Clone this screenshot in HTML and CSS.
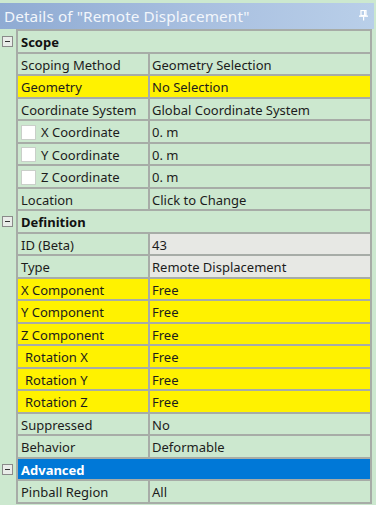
FILE: index.html
```html
<!DOCTYPE html>
<html>
<head>
<meta charset="utf-8">
<link rel="stylesheet" href="styles.css">
</head>
<body>
<div class="panel">
  <div class="strip"></div>
  <div class="title">
    <span class="title-text">Details of "Remote Displacement"</span>
    <svg class="pin" width="9" height="11" viewBox="0 0 9 11"><rect x="2" y="0.5" width="5" height="5" fill="none" stroke="#fff" stroke-width="1.2"/><rect x="5" y="1" width="1.5" height="4.5" fill="#fff"/><rect x="0" y="5.5" width="9" height="1.3" fill="#fff"/><rect x="4" y="6.5" width="1.2" height="4" fill="#fff"/></svg>
  </div>
  <div class="grid">
    <div class="row head"><div class="gutter"><span class="minus"></span></div><div class="cell sect">Scope</div></div>
    <div class="row"><div class="gutter"></div><div class="cell lab">Scoping Method</div><div class="cell val">Geometry Selection</div></div>
    <div class="row yellow"><div class="gutter"></div><div class="cell lab">Geometry</div><div class="cell val">No Selection</div></div>
    <div class="row"><div class="gutter"></div><div class="cell lab">Coordinate System</div><div class="cell val">Global Coordinate System</div></div>
    <div class="row"><div class="gutter"></div><div class="cell lab"><span class="check"></span>X Coordinate</div><div class="cell val">0. m</div></div>
    <div class="row"><div class="gutter"></div><div class="cell lab"><span class="check"></span>Y Coordinate</div><div class="cell val">0. m</div></div>
    <div class="row"><div class="gutter"></div><div class="cell lab"><span class="check"></span>Z Coordinate</div><div class="cell val">0. m</div></div>
    <div class="row"><div class="gutter"></div><div class="cell lab">Location</div><div class="cell val">Click to Change</div></div>
    <div class="row head"><div class="gutter"><span class="minus"></span></div><div class="cell sect">Definition</div></div>
    <div class="row ro"><div class="gutter"></div><div class="cell lab">ID (Beta)</div><div class="cell val">43</div></div>
    <div class="row ro"><div class="gutter"></div><div class="cell lab">Type</div><div class="cell val">Remote Displacement</div></div>
    <div class="row yellow"><div class="gutter"></div><div class="cell lab">X Component</div><div class="cell val">Free</div></div>
    <div class="row yellow"><div class="gutter"></div><div class="cell lab">Y Component</div><div class="cell val">Free</div></div>
    <div class="row yellow"><div class="gutter"></div><div class="cell lab">Z Component</div><div class="cell val">Free</div></div>
    <div class="row yellow"><div class="gutter"></div><div class="cell lab indent">Rotation X</div><div class="cell val">Free</div></div>
    <div class="row yellow"><div class="gutter"></div><div class="cell lab indent">Rotation Y</div><div class="cell val">Free</div></div>
    <div class="row yellow"><div class="gutter"></div><div class="cell lab indent">Rotation Z</div><div class="cell val">Free</div></div>
    <div class="row"><div class="gutter"></div><div class="cell lab">Suppressed</div><div class="cell val">No</div></div>
    <div class="row"><div class="gutter"></div><div class="cell lab">Behavior</div><div class="cell val">Deformable</div></div>
    <div class="row head selected"><div class="gutter"><span class="minus"></span></div><div class="cell sect">Advanced</div></div>
    <div class="row"><div class="gutter"></div><div class="cell lab">Pinball Region</div><div class="cell val">All</div></div>
  </div>
</div>
</body>
</html>
```

FILE: styles.css
```css
html, body {
  margin: 0;
  padding: 0;
  background: #cce8cf;
}
body {
  width: 376px;
  height: 505px;
  overflow: hidden;
  font-family: "Noto Sans", "Open Sans", sans-serif;
  font-size: 13px;
  color: #1c1c1c;
}
.strip {
  height: 3px;
  background: #cce8cf;
}
.title {
  height: 26px;
  margin-right: 2px;
  background: linear-gradient(to right, #8fabd3, #a9c0e0 55%, #b9cfe9);
  display: flex;
  align-items: center;
  justify-content: space-between;
  padding: 0 6px 0 4px;
}
.title-text {
  color: #f2f6fb;
  font-size: 15.3px;
  letter-spacing: 0.1px;
}
.pin {
  display: block;
  margin-top: -2px;
}
.grid {
  display: flex;
  flex-direction: column;
}
.grid::before {
  content: "";
  display: block;
  height: 2px;
  margin-left: 16px;
  width: 356px;
  background: #a7aca7;
}
.row {
  display: grid;
  grid-template-columns: 16px 134px 222px;
  height: 22.5px;
}
.gutter {
  display: flex;
  align-items: center;
  padding-left: 2px;
  padding-bottom: 1px;
}
.minus {
  width: 9px;
  height: 9px;
  border: 1px solid #8a8a8a;
  background: #e9ece9;
  position: relative;
  display: block;
}
.minus::after {
  content: "";
  position: absolute;
  left: 2px;
  right: 2px;
  top: 4px;
  height: 1px;
  background: #333;
}
.cell {
  box-sizing: border-box;
  border-bottom: 2px solid #a7aca7;
  border-right: 2px solid #a7aca7;
  display: flex;
  align-items: center;
  white-space: nowrap;
  overflow: hidden;
  padding-top: 2px;
}
.lab {
  border-left: 2px solid #a7aca7;
  padding-left: 3px;
}
.val {
  padding-left: 2px;
}
.indent {
  padding-left: 7px;
}
.sect {
  grid-column: 2 / 4;
  border-left: 2px solid #a7aca7;
  padding-left: 3px;
  font-weight: bold;
  color: #111;
}
.yellow .cell {
  background: #fff200;
}
.ro .val {
  background: #e7e8e4;
}
.selected .sect {
  background: #0078d7;
  color: #fff;
}
.check {
  width: 13px;
  height: 13px;
  background: #fff;
  border: 1px solid #c9cfc9;
  margin-right: 5px;
  flex: none;
}
```
